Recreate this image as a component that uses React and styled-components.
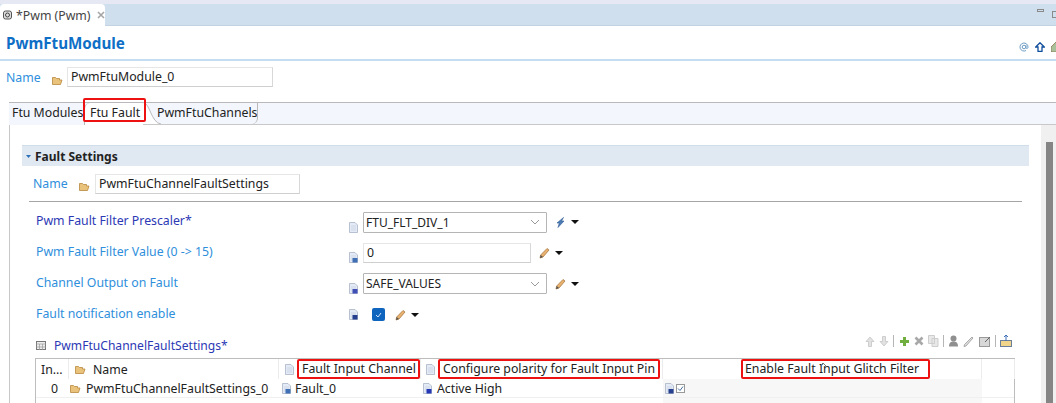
import React from 'react'
import styled, { createGlobalStyle } from 'styled-components'

const Globalstyle = createGlobalStyle`
*{
   margin: 0;
   padding: 0;
   box-sizing: border-box;
}
body{
   background: #fff;
   font-family: "Noto Sans", "Liberation Sans", sans-serif;
   font-size: 12.3px;
   color: #222;
}
`
const Page = styled.div`
   width: 1056px;
   height: 403px;
   overflow: hidden;
   display: flex;
   flex-direction: column;
`
const EditorBar = styled.div`
   height: 26px;
   flex: none;
   display: flex;
   justify-content: space-between;
   border-top: 4px solid #e6e9f3;
   background: #d0dfee;
   border-bottom: 1px solid #c4d3e2;
`
const EditorTab = styled.div`
   width: 105px;
   height: 22px;
   background: #fff;
   border-radius: 4px 4px 0 0;
   display: flex;
   align-items: center;
   gap: 3px;
   padding-left: 3px;
   color: #444;
   font-size: 12.3px;
   white-space: nowrap;
`
const WindowButtons = styled.div`
   display: flex;
   align-items: flex-start;
   gap: 8px;
   padding: 5px 0 0;
   margin-right: -4px;
`
const Minimize = styled.span`
   width: 7px;
   height: 3px;
   border: 1px solid #8a8a8a;
`
const Maximize = styled.span`
   width: 8px;
   height: 7px;
   margin-top: 2px;
   border: 1px solid #8a8a8a;
`
const TitleRow = styled.div`
   height: 35px;
   flex: none;
   padding: 0 5px 0 6px;
   display: flex;
   align-items: center;
   justify-content: space-between;
   border-bottom: 2px solid #c4ddf2;
`
const Title = styled.h1`
   font-size: 15.2px;
   line-height: 20px;
   font-weight: 700;
   color: #0f6fc6;
   margin-top: 1px;
`
const TitleTools = styled.div`
   display: flex;
   gap: 6px;
   margin-right: -10px;
   margin-top: 8px;
`
const NameRow = styled.div`
   display: flex;
   align-items: center;
   flex: none;
   height: ${p => p.$height}px;
   padding-left: ${p => p.$left}px;
`
const NameLabel = styled.span`
   width: ${p => p.$width}px;
   color: #2f8fdc;
   font-size: 12.3px;
`
const NameFolder = styled.span`
   display: flex;
   margin-top: 6px;
`
const TextBox = styled.div`
   width: ${p => p.$width}px;
   height: ${p => p.$height || 20}px;
   padding-left: 3px;
   background: #fff;
   border: 1px solid #e6e6e6;
   border-bottom-color: #cfcfcf;
   border-right-color: #d8d8d8;
   line-height: 17px;
   font-size: 12.3px;
   color: #222;
   margin-left: ${p => p.$left || 0}px;
`
const TabStrip = styled.div`
   margin: 9px 0 0 9px;
   height: 23px;
   flex: none;
   display: flex;
   border-top: 1px solid #b9b9b9;
   border-bottom: 1px solid #c8c8c8;
   background: #f3f7fd;
   position: relative;
`
const Tab = styled.div`
   height: 22px;
   width: ${p => p.$width}px;
   background: ${p => (p.$active ? '#fff' : '#f3f7fd')};
   padding-left: 3px;
   line-height: 20px;
   font-size: 12.3px;
   color: #222;
   white-space: nowrap;
   overflow: hidden;
   flex: none;
`
const ActiveTab = styled(Tab)`
   position: relative;
   overflow: visible;
   border-left: 1px solid #b9b9b9;
   border-radius: 6px 0 0 0;
   margin-bottom: -1px;
   padding-left: 5px;
`
const TabCurve = styled.svg`
   position: absolute;
   left: 100%;
   top: -1px;
`
const EndTab = styled(Tab)`
   margin-left: 12px;
   border-right: 1px solid #b9b9b9;
   border-bottom-right-radius: 6px;
   height: 21px;
   padding-left: 2px;
`
const TabMark = styled.div`
   position: absolute;
   left: 74px;
   top: -5px;
   width: 63px;
   height: 24px;
   border: 2px solid #ee1111;
   border-radius: 2px;
`
const Workspace = styled.div`
   flex: 1;
   min-height: 0;
   display: flex;
`
const Panel = styled.div`
   flex: 1;
   margin-left: 9px;
   border-left: 1px solid #c8c8c8;
   padding: 20px 12px 0 12px;
   display: flex;
   flex-direction: column;
`
const Scrollbar = styled.div`
   width: 15px;
   flex: none;
   background: #f0f0f0;
   padding: 17px 3px 0 5px;
`
const ScrollThumb = styled.div`
   height: 100%;
   background: #858585;
`
const SectionHead = styled.div`
   height: 21px;
   flex: none;
   display: flex;
   align-items: center;
   gap: 4px;
   padding-left: 4px;
   background: #e0e8f1;
   border-top: 1px solid #d2ddea;
   font-size: 12px;
   font-weight: 700;
   color: #222;
`
const SectionBody = styled.div`
   padding-left: 7px;
   width: 1000px;
`
const Divider = styled.div`
   height: 1px;
   width: 993px;
   background: #a5a5a5;
   margin-bottom: 5px;
`
const FormRow = styled.div`
   display: grid;
   grid-template-columns: 320px 14px auto;
   align-items: center;
   height: ${p => p.$height}px;
`
const FieldLabel = styled.span`
   padding-left: 7px;
   font-size: 12.3px;
   color: ${p => (p.$required ? '#2c39b5' : '#2f8fdc')};
   margin-top: -3px;
`
const FieldIcon = styled.span`
   display: flex;
   margin-top: ${p => p.$drop}px;
`
const Controls = styled.div`
   display: flex;
   align-items: center;
`
const Select = styled.div`
   width: 184px;
   height: 21px;
   border: 1px solid #b5b5b5;
   border-radius: 1px;
   padding: 0 6px 0 2px;
   margin-right: ${p => p.$after}px;
   display: flex;
   align-items: center;
   justify-content: space-between;
   font-size: 12px;
   color: #222;
`
const Caret = styled.span`
   width: 0;
   height: 0;
   margin-left: ${p => p.$left || 5}px;
   border-left: 4px solid transparent;
   border-right: 4px solid transparent;
   border-top: 4px solid #111;
`
const CheckBox = styled.span`
   width: 13px;
   height: 13px;
   margin: 0 10px 0 9px;
   border-radius: 2px;
   background: #0f65bd;
   display: flex;
   align-items: center;
   justify-content: center;
`
const TableTitleRow = styled.div`
   width: 983px;
   height: 26px;
   margin-top: 2px;
   display: flex;
   align-items: center;
   justify-content: space-between;
   padding-left: 7px;
`
const TableTitle = styled.div`
   display: flex;
   align-items: center;
   gap: 8px;
   font-size: 12.1px;
   color: #2c39b5;
`
const Toolbar = styled.div`
   display: flex;
   align-items: center;
   gap: 4.2px;
   margin-top: -8px;
`
const ToolSep = styled.span`
   width: 1px;
   height: 12px;
   background: #b5b5b5;
`
const Table = styled.div`
   width: 980px;
   height: 60px;
   margin-left: 6px;
   border: 1px solid #bdbdbd;
   border-bottom: none;
`
const HeadRow = styled.div`
   display: grid;
   grid-template-columns: 33px 210px 142px 242px 319px 33px;
   height: 20px;
`
const HeadCell = styled.div`
   display: flex;
   align-items: center;
   padding-left: ${p => p.$left || 0}px;
   gap: ${p => p.$gap || 0}px;
   border-right: 1px solid #ececec;
   font-size: 12.3px;
   white-space: nowrap;
`
const Marked = styled.span`
   height: 20px;
   padding: 0 ${p => p.$right}px 0 ${p => p.$pad}px;
   border: 2px solid #ee1111;
   border-radius: 2px;
   margin: -1px 0 0 ${p => p.$left || 0}px;
   display: flex;
   align-items: center;
   line-height: 16px;
   position: relative;
`
const Pointer = styled.svg`
   position: absolute;
   left: 76px;
   top: 1px;
`
const DataRow = styled(HeadRow)`
   height: 19px;
   border-bottom: 1px solid ${p => (p.$last ? 'transparent' : '#f0f0f0')};
`
const DataCell = styled(HeadCell)`
   border-right: none;
   justify-content: ${p => (p.$center ? 'flex-end' : 'flex-start')};
   padding-right: ${p => (p.$center ? 11 : 0)}px;
   background: ${p => (p.$muted ? '#f7f7f7' : 'transparent')};
`

const Folder = () => (
  <svg width="11" height="9" viewBox="0 0 11 9">
    <path d="M0.5 1.5h3l1 1h3v1.5H10L8.500 8.500h-8z" fill="#e9c37c" stroke="#b9883d" strokeWidth="0.8" />
  </svg>
)

const Doc = ({ badge }) => (
  <svg width="9" height="11" viewBox="0 0 9 11">
    <path d="M0.5 0.5h5.500l2.500 2.500v7.500h-8z" fill="#e4ebf6" stroke="#aab4c4" strokeWidth="0.8" />
    <path d="M2 4h5M2 6h5M2 8h5" stroke="#c3cddc" strokeWidth="0.7" />
    {badge && <rect x="3.5" y="6" width="5" height="4.5" fill={badge} />}
  </svg>
)

const Pencil = () => (
  <svg width="11" height="12" viewBox="0 0 11 12">
    <path d="M8 1.500l2 1.500-6 7-3 1 .7-3z" fill="#e9b26f" stroke="#a87842" strokeWidth="0.8" />
    <path d="M1.700 8l-.7 3 3-1z" fill="#555" />
  </svg>
)

const LinkIcon = () => (
  <svg width="10" height="11" viewBox="0 0 10 11">
    <path d="M7.500 0.500l-2 3.500H8L2 10.500l1.300-4.500H1z" fill="#4b7bb5" stroke="#2f5b94" strokeWidth="0.6" />
  </svg>
)

const Chevron = () => (
  <svg width="10" height="6" viewBox="0 0 10 6">
    <path d="M1 1l4 4 4-4" fill="none" stroke="#9a9a9a" strokeWidth="1" />
  </svg>
)

const ToolArrow = ({ down }) => (
  <svg width="10" height="11" viewBox="0 0 10 11" style={down ? { transform: 'rotate(180deg)' } : undefined}>
    <path d="M5 1l4 4.500H6.500v5h-3v-5H1z" fill="#e2e2e2" stroke="#c5c5c5" strokeWidth="0.8" />
  </svg>
)

export default function App() {
  return (
    <Page>
      <Globalstyle />
      <EditorBar>
        <EditorTab>
          <svg width="10" height="11" viewBox="0 0 10 11">
            <rect x="0.5" y="1" width="8" height="8" rx="2" fill="#ddd" stroke="#555" />
            <circle cx="4.5" cy="5" r="2" fill="none" stroke="#444" />
          </svg>
          *Pwm (Pwm)
          <svg width="8" height="8" viewBox="0 0 8 8" style={{ marginLeft: 3 }}>
            <path d="M1 1l6 6M7 1l-6 6" stroke="#a5a5a5" strokeWidth="1.6" />
          </svg>
        </EditorTab>
        <WindowButtons>
          <Minimize />
          <Maximize />
        </WindowButtons>
      </EditorBar>
      <TitleRow>
        <Title>PwmFtuModule</Title>
        <TitleTools>
          <svg width="10" height="10" viewBox="0 0 10 10">
            <path d="M7 8.500A4 4 0 1 1 9 5c0 2-2 2-2 .5V3.200M6.800 5a1.800 1.800 0 1 1-3.600 0 1.800 1.800 0 0 1 3.600 0z" fill="none" stroke="#6d9cc4" />
          </svg>
          <svg width="10" height="10" viewBox="0 0 10 10">
            <path d="M5 .7l4.300 4.300H7v4.300H3V5H.7z" fill="#fff" stroke="#0f4f9c" strokeWidth="1.3" />
          </svg>
          <svg width="10" height="10" viewBox="0 0 10 10">
            <path d="M5 0l5 5v5H0V5z" fill="#a9c19a" stroke="#8a7250" strokeWidth="0.8" />
          </svg>
        </TitleTools>
      </TitleRow>
      <NameRow $height={32} $left={6}>
        <NameLabel $width={46}>Name</NameLabel>
        <NameFolder>
          <Folder />
        </NameFolder>
        <TextBox $width={206} $left={4}>PwmFtuModule_0</TextBox>
      </NameRow>
      <TabStrip>
        <Tab $width={75}>Ftu Modules</Tab>
        <ActiveTab $active $width={59}>
          Ftu Fault
          <TabCurve width="18" height="23" viewBox="0 0 18 23">
            <path d="M0 0C7 0 8 21 18 22H0z" fill="#fff" />
            <path d="M0 .5C7 .5 8 21 18 22" fill="none" stroke="#b9b9b9" />
          </TabCurve>
        </ActiveTab>
        <EndTab $width={103}>PwmFtuChannels</EndTab>
        <TabMark />
      </TabStrip>
      <Workspace>
        <Panel>
          <SectionHead>
            <svg width="5" height="3" viewBox="0 0 5 3">
              <path d="M0 0h5L2.500 3z" fill="#2b6fb8" />
            </svg>
            Fault Settings
          </SectionHead>
          <SectionBody>
            <NameRow $height={35} $left={4}>
              <NameLabel $width={46}>Name</NameLabel>
              <NameFolder>
                <Folder />
              </NameFolder>
              <TextBox $width={205} $left={5}>PwmFtuChannelFaultSettings</TextBox>
            </NameRow>
            <Divider />
            <FormRow $height={30}>
              <FieldLabel $required>Pwm Fault Filter Prescaler*</FieldLabel>
              <FieldIcon $drop={10}>
                <Doc />
              </FieldIcon>
              <Controls>
                <Select $after={9}>
                  FTU_FLT_DIV_1
                  <Chevron />
                </Select>
                <LinkIcon />
                <Caret />
              </Controls>
            </FormRow>
            <FormRow $height={31}>
              <FieldLabel>Pwm Fault Filter Value (0 -&gt; 15)</FieldLabel>
              <FieldIcon $drop={10}>
                <Doc badge="#3f6fb5" />
              </FieldIcon>
              <Controls>
                <TextBox $width={168}>0</TextBox>
                <span style={{ width: 8 }} />
                <Pencil />
                <Caret />
              </Controls>
            </FormRow>
            <FormRow $height={31}>
              <FieldLabel>Channel Output on Fault</FieldLabel>
              <FieldIcon $drop={10}>
                <Doc badge="#3f4fb5" />
              </FieldIcon>
              <Controls>
                <Select $after={8}>
                  SAFE_VALUES
                  <Chevron />
                </Select>
                <Pencil />
                <Caret />
              </Controls>
            </FormRow>
            <FormRow $height={31}>
              <FieldLabel>Fault notification enable</FieldLabel>
              <FieldIcon $drop={0}>
                <Doc badge="#26408f" />
              </FieldIcon>
              <Controls>
                <CheckBox>
                  <svg width="7" height="6" viewBox="0 0 7 6">
                    <path d="M1 3l2 2 3-4" fill="none" stroke="#cfe4fb" strokeWidth="1" />
                  </svg>
                </CheckBox>
                <Pencil />
                <Caret />
              </Controls>
            </FormRow>
            <TableTitleRow>
              <TableTitle>
                <svg width="10" height="9" viewBox="0 0 10 9">
                  <rect x="0.5" y="0.5" width="9" height="8" fill="#eee" stroke="#777" />
                  <path d="M0 3h10M0 6h10M3.500 3v6M6.500 3v6" stroke="#999" strokeWidth="0.7" />
                </svg>
                PwmFtuChannelFaultSettings*
              </TableTitle>
              <Toolbar>
                <ToolArrow />
                <ToolArrow down />
                <ToolSep />
                <svg width="11" height="11" viewBox="0 0 11 11">
                  <path d="M4 1h3v3h3v3H7v3H4V7H1V4h3z" fill="#6fae3f" />
                </svg>
                <svg width="10" height="10" viewBox="0 0 10 10">
                  <path d="M1.500 1.500l7 7M8.500 1.500l-7 7" stroke="#a8a8a8" strokeWidth="2.6" />
                </svg>
                <svg width="11" height="12" viewBox="0 0 11 12">
                  <path d="M.5.5h6v8h-6zM4 3.500h6v8H4z" fill="#e8e8e8" stroke="#cdcdcd" />
                </svg>
                <ToolSep />
                <svg width="11" height="12" viewBox="0 0 11 12">
                  <circle cx="5.500" cy="3.500" r="3" fill="#8f8f8f" />
                  <path d="M1 11.500c0-4 2-5 4.500-5s4.500 1 4.500 5z" fill="#8f8f8f" />
                </svg>
                <svg width="11" height="11" viewBox="0 0 11 11">
                  <path d="M9 1l1 1-7 8-2 .5L1.500 8.500z" fill="#ddd" stroke="#999" strokeWidth="0.8" />
                </svg>
                <svg width="12" height="11" viewBox="0 0 12 11">
                  <rect x="0.5" y="1.500" width="10" height="9" fill="#d8d8d8" stroke="#9a9a9a" />
                  <path d="M6 6l5-5" stroke="#666" />
                </svg>
                <ToolSep />
                <svg width="12" height="12" viewBox="0 0 12 12">
                  <rect x="0.5" y="5.500" width="11" height="6" fill="#f0d58a" stroke="#6a7f99" />
                  <path d="M6 0v6M4 2l2-2 2 2" fill="none" stroke="#3f6fb5" />
                </svg>
              </Toolbar>
            </TableTitleRow>
            <Table>
              <HeadRow>
                <HeadCell $left={5}>In...</HeadCell>
                <HeadCell $left={6} $gap={7}>
                  <Folder />
                  Name
                </HeadCell>
                <HeadCell $left={6} $gap={3}>
                  <Doc />
                  <Marked $pad={3} $right={2}>Fault Input Channel</Marked>
                </HeadCell>
                <HeadCell $left={5} $gap={3}>
                  <Doc />
                  <Marked $pad={3} $right={3}>Configure polarity for Fault Input Pin</Marked>
                </HeadCell>
                <HeadCell>
                  <Marked $left={78} $pad={2} $right={9}>
                    Enable Fault Input Glitch Filter
                    <Pointer width="8" height="4" viewBox="0 0 8 4">
                      <path d="M1 4l3-3 3 3" fill="none" stroke="#777" />
                    </Pointer>
                  </Marked>
                </HeadCell>
                <HeadCell />
              </HeadRow>
              <DataRow>
                <DataCell $center>0</DataCell>
                <DataCell $left={1} $gap={5}>
                  <Folder />
                  PwmFtuChannelFaultSettings_0
                </DataCell>
                <DataCell $left={3} $gap={4}>
                  <Doc badge="#3f6fb5" />
                  Fault_0
                </DataCell>
                <DataCell $left={2} $gap={5}>
                  <Doc badge="#2438b5" />
                  Active High
                </DataCell>
                <DataCell $muted $left={2} $gap={2}>
                  <Doc badge="#26408f" />
                  <svg width="9" height="9" viewBox="0 0 9 9">
                    <rect x="0.5" y="0.5" width="8" height="8" fill="#fff" stroke="#999" />
                    <path d="M2 4.500l2 2 3-4" fill="none" stroke="#4a6f9a" />
                  </svg>
                </DataCell>
                <DataCell />
              </DataRow>
              <DataRow $last>
                <DataCell />
                <DataCell />
                <DataCell />
                <DataCell />
                <DataCell $muted />
                <DataCell />
              </DataRow>
            </Table>
          </SectionBody>
        </Panel>
        <Scrollbar>
          <ScrollThumb />
        </Scrollbar>
      </Workspace>
    </Page>
  )
}
